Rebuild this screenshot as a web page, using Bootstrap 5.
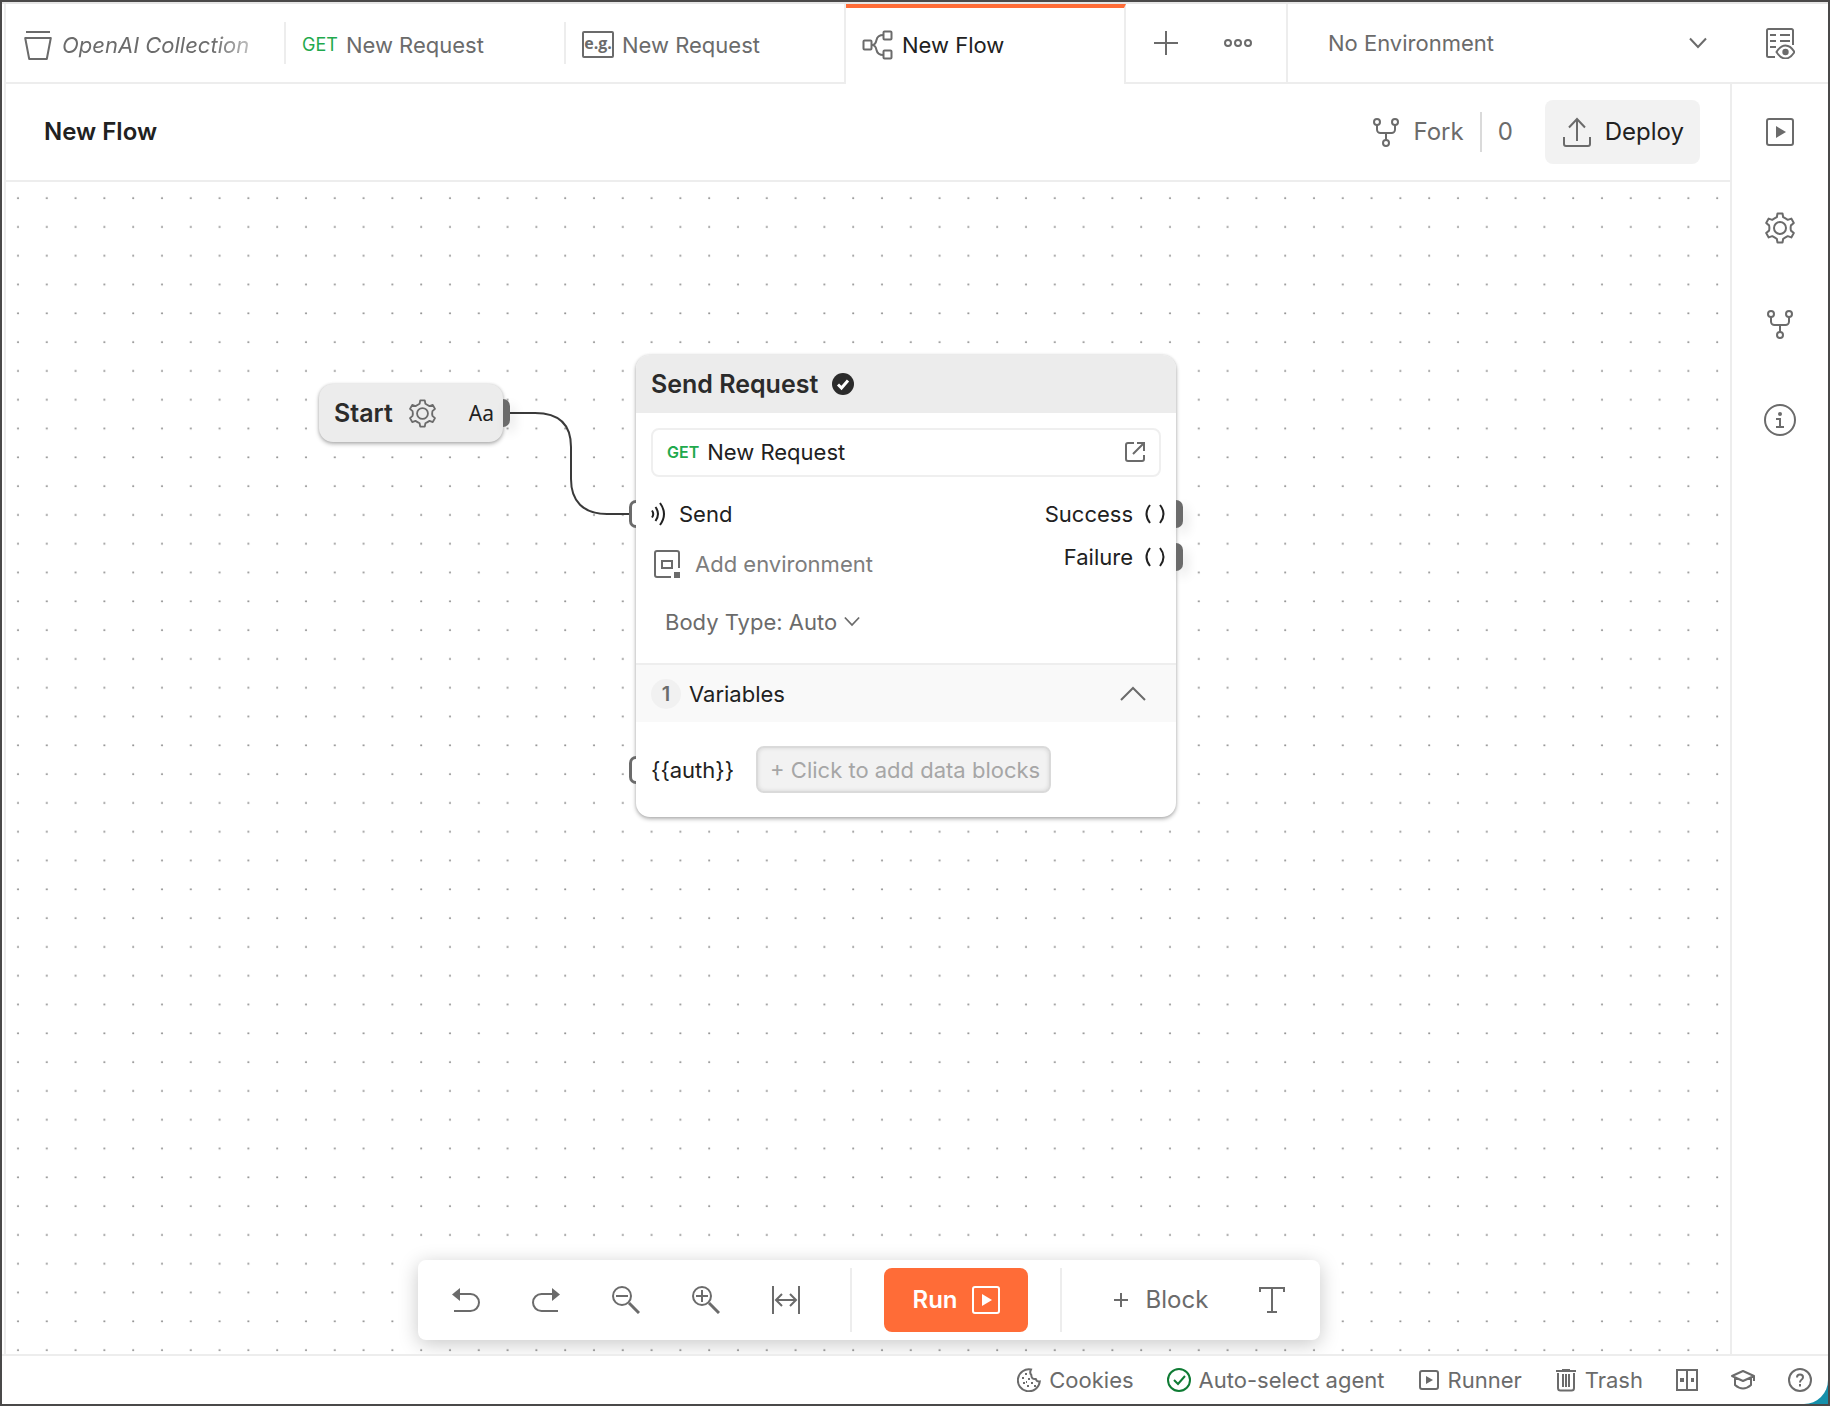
<!DOCTYPE html>
<html lang="en">
<head>
<meta charset="utf-8">
<meta name="viewport" content="width=device-width, initial-scale=1">
<title>New Flow</title>
<link href="https://cdn.jsdelivr.net/npm/bootstrap@5.3.0/dist/css/bootstrap.min.css" rel="stylesheet">
<style>
  :root { --ink: #212121; --muted-ink: #6b6b6b; --line: #ededed; --brand: #ff6c37; --get: #1fa94d; }
  body { font-family: Inter, "Liberation Sans", sans-serif; font-size: 22px; line-height: 28px; color: var(--muted-ink); background: #1590ab; }
  svg { fill: none; stroke: currentColor; stroke-width: 2; flex-shrink: 0; display: block; }
  button, select, input, a { color: inherit; }
  .window-frame { height: 100vh; min-height: 900px; border: 2px solid #4a4949; }
  .window-body { background: #fff; border-top: 2px solid #e6e6e6; border-bottom-right-radius: 24px; }
  .inset-edge { margin-left: 2px; border-left: 2px solid var(--line); }
  .text-ink { color: var(--ink); }
  .icon-ink { color: var(--muted-ink); }
  .agent-ok { color: #0f7b34; }
  .text-get { color: var(--get); font-size: 18px; }
  .plain-btn { border: 0; background: none; padding: 0; display: flex; align-items: center; justify-content: center; }

  .tab-strip { height: 80px; }
  .flow-tab { width: 280px; padding: 4px 16px 0; border-bottom: 2px solid var(--line); text-decoration: none; position: relative; display: flex; align-items: center; white-space: nowrap; }
  .flow-tab.with-rule::after { content: ""; position: absolute; right: 0; top: 18px; width: 2px; height: 42px; background: var(--line); }
  .flow-tab.before-active { border-right: 2px solid var(--line); }
  .flow-tab.is-active { border-top: 4px solid var(--brand); border-bottom: 0; border-right: 2px solid var(--line); padding: 0 16px 2px; }
  .eg-mark { font-family: "Open Sans", sans-serif; font-size: 16px; font-weight: 700; fill: currentColor; stroke: none; }
  .fade-end { -webkit-mask-image: linear-gradient(90deg, #000 80%, rgba(0,0,0,.45)); mask-image: linear-gradient(90deg, #000 80%, rgba(0,0,0,.45)); }
  .tab-tools { width: 162px; border-right: 2px solid var(--line); border-bottom: 2px solid var(--line); }
  .tab-tools button { width: 72px; }
  .env-area { border-bottom: 2px solid var(--line); }
  .chev-select { appearance: none; border: 0; border-radius: 0; background-color: transparent; color: var(--muted-ink); font-size: 22px; line-height: 28px;
    background-image: url("data:image/svg+xml,%3Csvg xmlns='http://www.w3.org/2000/svg' viewBox='0 0 18 12' fill='none' stroke='%236b6b6b' stroke-width='2'%3E%3Cpath d='M1 1.500l8 8.500 8-8.500'/%3E%3C/svg%3E"); background-size: 18px 12px; background-repeat: no-repeat; }
  .env-select { padding: 0 60px 0 40px; background-position: right 25px center; }
  .rail-width { width: 96px; }

  .flow-head { height: 98px; padding: 0 30px 0 38px; border-bottom: 2px solid var(--line); font-size: 24px; }
  .flow-head h1 { font-size: 24px; line-height: 32px; font-weight: 600; }
  .fork-btn { gap: 13px; }
  .fork-rule { width: 2px; height: 40px; background: #dadada; }
  .deploy-btn { height: 64px; padding: 0 16px 0 18px; border-radius: 8px; background: #f2f2f2; gap: 14px; }
  .side-rail { width: 98px; border-left: 2px solid var(--line); }
  .side-rail button { height: 96px; width: 100%; }

  .flow-canvas { background: #fff; }
  .flow-canvas > .dots { position: absolute; inset: 0; width: 100%; height: 100%; stroke: none; }
  .flow-edge { position: absolute; left: 503px; top: 230px; color: #3a3a3a; }
  .flow-node { position: absolute; border-radius: 14px; box-shadow: 0 2px 4px rgba(0,0,0,.3), 0 0 3px rgba(0,0,0,.12); }
  .start-node { left: 313px; top: 202px; width: 184px; height: 58px; padding: 0 9px 0 15px; background: #ececec; }
  .send-node { left: 630px; top: 173px; width: 540px; background: #fff; }
  .node-title { font-size: 25px; line-height: 32px; font-weight: 600; color: #2b2b2b; }
  .node-head { height: 58px; padding: 0 15px; background: #ececec; border-radius: 14px 14px 0 0; gap: 14px; }
  .gear-btn { margin-left: 15px; }
  .type-mark { font-family: "Noto Sans", sans-serif; font-size: 21px; }
  .port { position: absolute; top: 50%; width: 7px; height: 28px; margin-top: -14px; box-shadow: 4px 6px 12px rgba(0,0,0,.12); }
  .port-out { left: 100%; background: #6b6b6b; border-radius: 0 7px 7px 0; }
  .port-in { right: 100%; border: 3px solid #6b6b6b; border-right: 0; border-radius: 7px 0 0 7px; box-shadow: none; background: #fff; }
  .request-box { height: 49px; margin: 15px; padding: 0 14px 2px; border: 2px solid #efefef; border-radius: 8px; }
  .port-row { height: 43px; padding: 0 11px 0 15px; position: relative; display: flex; align-items: center; }
  .paren-mark { margin-left: 12px; }
  .env-row { height: 58px; padding: 0 18px; gap: 15px; color: #7d7d7d; }
  .body-row { height: 57px; padding: 0 29px; }
  .body-select { padding: 0 22px 0 0; width: auto; background-position: right center; background-size: 16px 11px; }
  .vars-head { height: 59px; margin-top: 13px; padding: 0 30px 0 15px; border-top: 2px solid #eee; background: #f9f9f9; }
  .var-count { width: 30px; height: 30px; border-radius: 15px; background: #f1f1f1; font-size: 20px; font-weight: 600; text-align: center; line-height: 30px; }
  .auth-row { height: 95px; padding: 0 15px; position: relative; gap: 22px; }
  .data-input { width: 295px; height: 47px; padding: 0 0 0 12px; border: 2px solid #dadada; border-radius: 8px; background: #f2f2f2; box-shadow: inset 0 0 4px rgba(0,0,0,.12); font-size: 22px; }
  .data-input::placeholder { color: #a6a6a6; opacity: 1; }

  .action-dock { position: absolute; bottom: 14px; left: 2px; right: 0; width: max-content; height: 80px; margin: 0 auto; padding: 8px; background: #fff; border-radius: 8px; box-shadow: 0 4px 20px rgba(0,0,0,.22); font-size: 24px; }
  .dock-btn { width: 80px; height: 64px; }
  .dock-rule { width: 2px; height: 64px; margin: 0 32px 0 24px; background: var(--line); }
  .dock-rule.second { margin: 0 24px 0 32px; }
  .run-btn { width: 144px; height: 64px; border-radius: 8px; background: var(--brand); color: #fff; font-weight: 600; gap: 14px; }
  .block-btn { width: 146px; height: 64px; gap: 18px; padding-left: 4px; }

  .status-bar { height: 50px; border-top: 2px solid var(--line); padding: 0 16px; gap: 33px; }
  .status-bar button { gap: 8px; }
</style>
</head>
<body>
<svg width="0" height="0" class="position-absolute" aria-hidden="true">
  <symbol id="gear" viewBox="0 0 32 32"><path stroke-linejoin="round" d="M12.800 5.200L13.500 1.500h5l.7 3.700Q21.500 6.500 23.750 7.830L27.310 6.580 29.810 10.920 26.950 13.370Q26.300 16 26.950 18.630L29.810 21.080 27.310 25.420 23.750 24.170Q21.500 25.500 19.200 26.800L18.500 30.500h-5l-.7-3.700Q10.500 25.500 8.250 24.170L4.690 25.420 2.190 21.080 5.050 18.630Q5.700 16 5.050 13.370L2.190 10.920 4.690 6.580 8.250 7.830Q10.500 6.500 12.800 5.200Z"/><circle cx="16" cy="16" r="6"/></symbol>
  <symbol id="play" viewBox="0 0 28 28"><rect x="1" y="1" width="26" height="26" rx="2"/><path d="M10 8l10 6-10 6z" fill="currentColor" stroke="none"/></symbol>
  <symbol id="fork" viewBox="0 0 28 30"><circle cx="5" cy="5" r="3"/><circle cx="23" cy="5" r="3"/><circle cx="14" cy="26" r="3"/><path d="M5 8v4.500a3.500 3.500 0 0 0 3.500 3.500h11a3.500 3.500 0 0 0 3.500-3.500V8M14 16v7"/></symbol>
  <symbol id="parens" viewBox="0 0 20 20"><path d="M5 1q-7 9 0 18M15 1q7 9 0 18"/></symbol>
</svg>

<div class="window-frame">
<div class="window-body h-100 d-flex flex-column">

  <nav class="tab-strip inset-edge d-flex flex-shrink-0" aria-label="Open tabs">
    <a href="#" class="flow-tab with-rule">
      <svg width="32" height="32" class="me-2"><path d="M4 3h24M3.200 9h25.600l-4 21H7.200z" stroke-linejoin="round"/></svg>
      <span class="fst-italic fade-end">OpenAI Collection</span>
    </a>
    <a href="#" class="flow-tab with-rule"><span class="text-get me-2">GET</span>New Request</a>
    <a href="#" class="flow-tab before-active">
      <svg width="32" height="28" class="me-2"><rect x="1" y="1" width="30" height="25" rx="1"/><text class="eg-mark" x="16" y="18" text-anchor="middle">e.g.</text></svg>
      New Request
    </a>
    <a href="#" class="flow-tab is-active text-ink" aria-current="page">
      <svg width="32" height="32" class="me-2 icon-ink"><rect x="1.500" y="11.500" width="8" height="9" rx="1"/><rect x="21.500" y="2.500" width="8" height="8" rx="1"/><rect x="21.500" y="21.500" width="8" height="8" rx="1"/><path d="M10 16q3.500 0 4.500-5t7-5M10 16q3.500 0 4.500 5t7 5"/></svg>
      New Flow
    </a>
    <div class="tab-tools d-flex ps-1">
      <button class="plain-btn" aria-label="New tab"><svg width="26" height="26"><path d="M13 1v24M1 13h24"/></svg></button>
      <button class="plain-btn" aria-label="More tabs"><svg width="30" height="12"><circle cx="5" cy="6" r="3"/><circle cx="15" cy="6" r="3"/><circle cx="25" cy="6" r="3"/></svg></button>
    </div>
    <div class="env-area d-flex flex-grow-1">
      <select class="chev-select env-select flex-grow-1" aria-label="Environment"><option>No Environment</option></select>
      <button class="plain-btn rail-width" aria-label="Environment quick look">
        <svg width="30" height="32"><path d="M10 30H3.500a1.500 1.500 0 0 1-1.500-1.500V3.500A1.500 1.500 0 0 1 3.500 2h23A1.500 1.500 0 0 1 28 3.500V18"/><path d="M5 8h6M15 8h10M5 14h6M15 14h10M5 20h6"/><path d="M11.500 25q4-6.500 9-6.500t9 6.500q-4 6.500-9 6.500t-9-6.500z"/><circle cx="20.500" cy="25" r="3.200" fill="currentColor" stroke="none"/></svg>
      </button>
    </div>
  </nav>

  <div class="inset-edge d-flex flex-grow-1">
    <main class="d-flex flex-column flex-grow-1">
      <header class="flow-head d-flex align-items-center flex-shrink-0">
        <h1 class="mb-0 me-auto text-ink">New Flow</h1>
        <button class="plain-btn fork-btn"><svg width="28" height="30"><use href="#fork"/></svg>Fork</button>
        <span class="fork-rule ms-3"></span>
        <button class="plain-btn px-3" aria-label="Fork count">0</button>
        <button class="plain-btn deploy-btn text-ink ms-3">
          <svg width="28" height="30" class="icon-ink"><path d="M14 24V2M6 10.500L14 2l8 8.500M1 20v7a2 2 0 0 0 2 2h22a2 2 0 0 0 2-2v-7"/></svg>Deploy
        </button>
      </header>

      <section class="flow-canvas position-relative flex-grow-1 overflow-hidden" aria-label="Flow canvas">
        <svg class="dots" aria-hidden="true">
          <defs><pattern id="grid" width="24" height="24" patternUnits="userSpaceOnUse" patternTransform="scale(1.2)"><circle cx="10" cy="13.400" r=".85" fill="#8c8c8c"/></pattern></defs>
          <rect width="100%" height="100%" fill="url(#grid)"/>
        </svg>
        <svg class="flow-edge" width="122" height="104" aria-hidden="true"><path d="M0 1h26c24 0 36 12 36 34v32c0 22 12 35 36 35h24"/></svg>

        <article class="flow-node start-node d-flex align-items-center">
          <span class="node-title">Start</span>
          <button class="plain-btn gear-btn me-auto" aria-label="Start settings"><svg width="29" height="29"><use href="#gear"/></svg></button>
          <span class="type-mark text-ink">Aa</span>
          <span class="port port-out"></span>
        </article>

        <article class="flow-node send-node">
          <header class="node-head d-flex align-items-center">
            <h2 class="node-title mb-0">Send Request</h2>
            <svg width="22" height="22" aria-label="Valid"><circle cx="11" cy="11" r="11" fill="#2b2b2b" stroke="none"/><path d="M6 11.500l3.500 3.500L16 7.500" stroke="#fff" stroke-width="3"/></svg>
          </header>
          <div class="request-box d-flex align-items-center">
            <span class="text-get fw-semibold fs-6 me-2">GET</span><span class="text-ink me-auto">New Request</span>
            <button class="plain-btn" aria-label="Open request"><svg width="20" height="20"><path d="M9 1H3a2 2 0 0 0-2 2v14a2 2 0 0 0 2 2h14a2 2 0 0 0 2-2v-4M12 1h7v8M19 1L8 12"/></svg></button>
          </div>
          <div class="d-flex justify-content-between">
            <div>
              <div class="port-row text-ink">
                <span class="port port-in"></span>
                <svg width="16" height="26" class="me-2"><path d="M1 9.500q2.500 3.500 0 7M4.500 6q5 7 0 14M9 2q8 11 0 22"/></svg><span class="ms-1">Send</span>
              </div>
              <button class="plain-btn env-row"><svg width="26" height="28" class="icon-ink"><path d="M17 27H3a2 2 0 0 1-2-2V3a2 2 0 0 1 2-2h20a2 2 0 0 1 2 2v15"/><rect x="8" y="11" width="10" height="7"/><path d="M20 22h6v6h-6z" fill="currentColor" stroke="none"/></svg>Add environment</button>
              <div class="body-row d-flex align-items-center">
                <select class="chev-select body-select" aria-label="Body type"><option>Body Type: Auto</option></select>
              </div>
            </div>
            <div class="text-ink">
              <div class="port-row justify-content-end">Success
                <svg width="20" height="20" class="paren-mark"><use href="#parens"/></svg><span class="port port-out"></span></div>
              <div class="port-row justify-content-end">Failure
                <svg width="20" height="20" class="paren-mark"><use href="#parens"/></svg><span class="port port-out"></span></div>
            </div>
          </div>
          <button class="plain-btn vars-head w-100" aria-expanded="true">
            <span class="var-count me-2">1</span><span class="text-ink me-auto">Variables</span>
            <svg width="26" height="16"><path d="M1 14L13 2l12 12"/></svg>
          </button>
          <div class="auth-row d-flex align-items-center">
            <span class="port port-in"></span>
            <label for="auth-data" class="text-ink">{{auth}}</label>
            <input id="auth-data" class="data-input" type="text" placeholder="+ Click to add data blocks">
          </div>
        </article>

        <div class="action-dock d-flex align-items-center" role="toolbar" aria-label="Flow actions">
          <button class="plain-btn dock-btn" aria-label="Undo"><svg width="28" height="24"><path d="M6 6h12.500a8.500 8.500 0 0 1 0 17H2"/><path d="M0 6.500L8 0v13z" fill="currentColor" stroke="none"/></svg></button>
          <button class="plain-btn dock-btn" aria-label="Redo"><svg width="28" height="24"><path d="M22 6H9.500a8.500 8.500 0 0 0 0 17H26"/><path d="M28 6.500L20 0v13z" fill="currentColor" stroke="none"/></svg></button>
          <button class="plain-btn dock-btn" aria-label="Zoom out"><svg width="28" height="28"><circle cx="10" cy="10" r="9"/><path d="M4 10h12"/><path d="M17 17l10 10" stroke-width="3"/></svg></button>
          <button class="plain-btn dock-btn" aria-label="Zoom in"><svg width="28" height="28"><circle cx="10" cy="10" r="9"/><path d="M4 10h12M10 4v12"/><path d="M17 17l10 10" stroke-width="3"/></svg></button>
          <button class="plain-btn dock-btn" aria-label="Fit to view"><svg width="28" height="28"><path d="M1 0v28M27 0v28M4 14h20M10 8l-6 6 6 6M18 8l6 6-6 6"/></svg></button>
          <span class="dock-rule"></span>
          <button class="plain-btn run-btn">Run<svg width="28" height="28"><use href="#play"/></svg></button>
          <span class="dock-rule second"></span>
          <button class="plain-btn block-btn"><svg width="14" height="14"><path d="M7 0v14M0 7h14"/></svg>Block</button>
          <button class="plain-btn dock-btn" aria-label="Add text"><svg width="28" height="28"><path d="M2 6V2h24v4M14 2v24M9 26h10"/></svg></button>
        </div>
      </section>
    </main>

    <aside class="side-rail flex-shrink-0" aria-label="Flow panels">
      <button class="plain-btn" aria-label="Runs"><svg width="28" height="28"><use href="#play"/></svg></button>
      <button class="plain-btn" aria-label="Settings"><svg width="32" height="32"><use href="#gear"/></svg></button>
      <button class="plain-btn" aria-label="Forks"><svg width="28" height="30"><use href="#fork"/></svg></button>
      <button class="plain-btn" aria-label="Information"><svg width="32" height="32"><circle cx="16" cy="16" r="15"/><circle cx="16" cy="10" r="2" fill="currentColor" stroke="none"/><path d="M12 15h4v8M12 23h8"/></svg></button>
    </aside>
  </div>

  <footer class="status-bar d-flex align-items-center justify-content-end flex-shrink-0">
    <button class="plain-btn"><svg width="24" height="24"><path d="M14 1.500A11 11 0 1 0 22.800 13.500q-3 .5-4-2.500-4.500.5-4.500-4-2-2-.3-5.500z"/><path d="M8 6h2M5 10h2M11 11h2M6 15h2M10 18h2M14 15h2M17 18h2M9 14h1"/></svg>Cookies</button>
    <button class="plain-btn"><svg width="24" height="24" class="agent-ok"><circle cx="12" cy="12" r="11"/><path d="M7 12l4 4 7-8"/></svg>Auto-select agent</button>
    <button class="plain-btn"><svg width="22" height="22"><rect x="2" y="2" width="18" height="18" rx="2"/><path d="M8 7l7 4-7 4z" fill="currentColor" stroke="none"/></svg>Runner</button>
    <button class="plain-btn"><svg width="22" height="24"><path d="M1 3h20M7 2h8M3 5v15a2.500 2.500 0 0 0 2.500 2.500h11A2.500 2.500 0 0 0 19 20V5M8 6v13M11 6v13M14 6v13"/></svg>Trash</button>
    <button class="plain-btn" aria-label="Two-pane view"><svg width="22" height="22"><rect x="1" y="1" width="20" height="20"/><path d="M11 1v20"/><path d="M4 9h4v4H4zM15 9h3v4h-3z" fill="currentColor" stroke="none"/></svg></button>
    <button class="plain-btn" aria-label="Learning center"><svg width="24" height="22"><path d="M1 7l11-5 11 5-11 5zM4 9v7q8 7 16 0V9M23 7v5" stroke-linejoin="round"/></svg></button>
    <button class="plain-btn" aria-label="Help"><svg width="24" height="24"><circle cx="12" cy="12" r="11"/><path d="M9 9.500q0-3 3-3t3 2.700q0 1.700-1.800 2.800-1.200.8-1.200 2.500M12 16v2.500"/></svg></button>
  </footer>
</div>
</div>
<script src="https://cdn.jsdelivr.net/npm/bootstrap@5.3.0/dist/js/bootstrap.bundle.min.js"></script>
</body>
</html>
